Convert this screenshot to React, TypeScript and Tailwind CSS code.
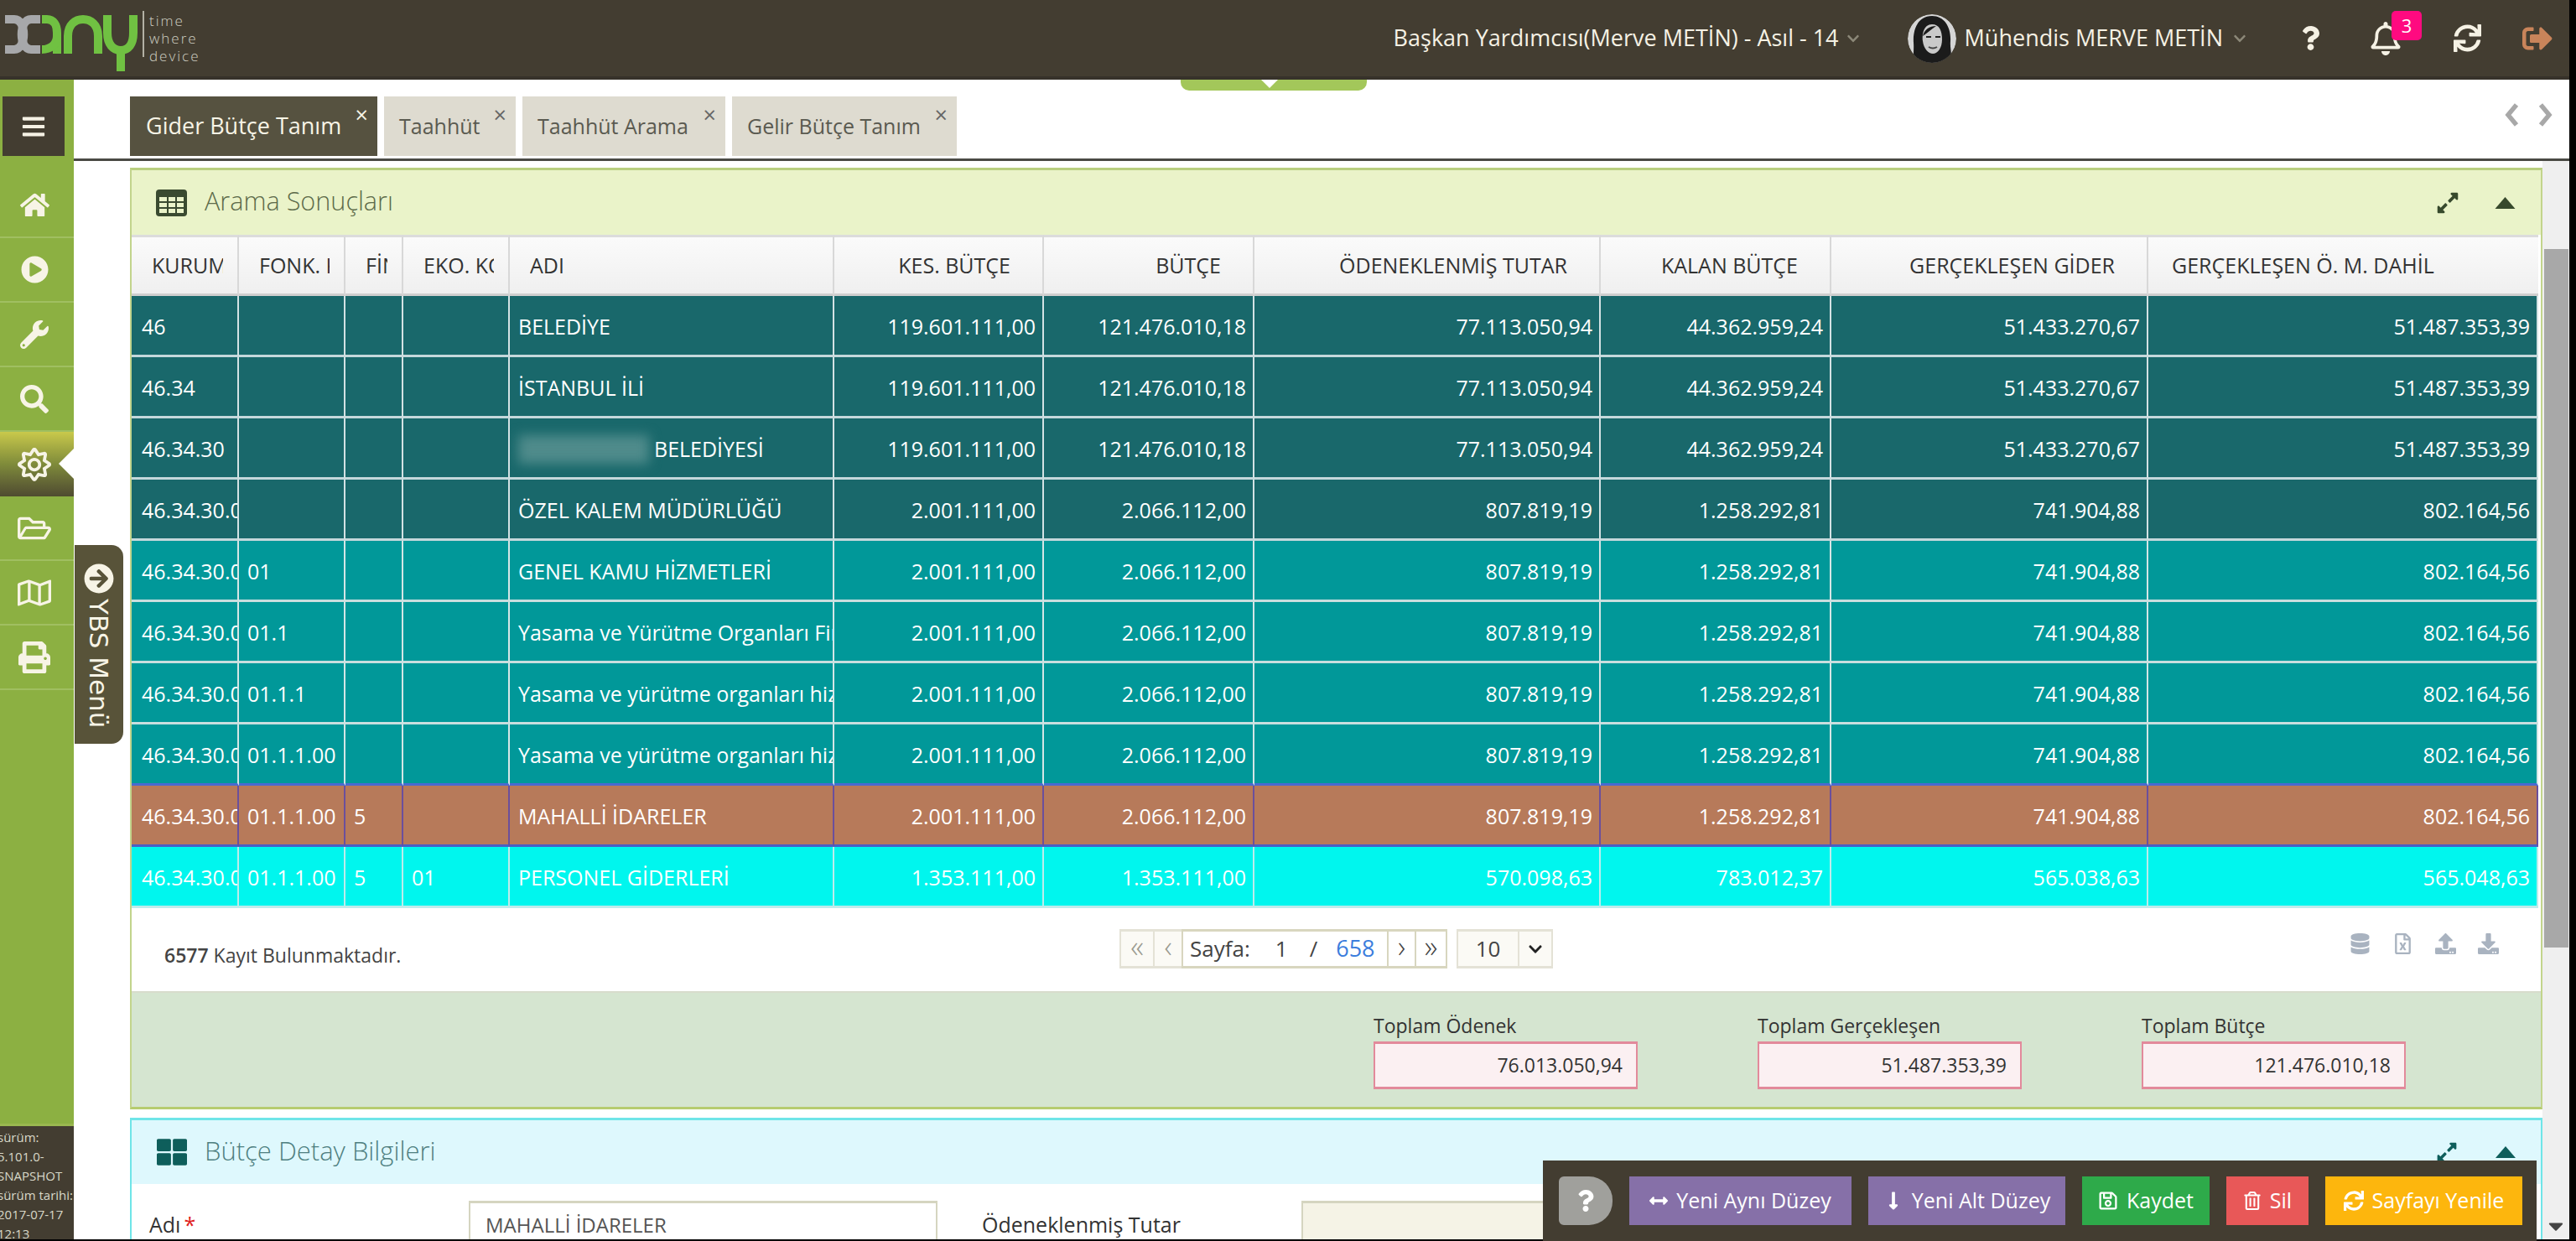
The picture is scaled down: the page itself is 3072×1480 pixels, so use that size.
import type { ReactNode } from "react";
import {
  FaHome,
  FaPlayCircle,
  FaWrench,
  FaSearch,
  FaRegSun,
  FaRegFolderOpen,
  FaRegMap,
  FaPrint,
  FaBars,
  FaChevronDown,
  FaQuestion,
  FaRegBell,
  FaSync,
  FaSignOutAlt,
  FaThLarge,
  FaExpandAlt,
  FaArrowCircleRight,
  FaDatabase,
  FaRegFileExcel,
  FaUpload,
  FaDownload,
  FaArrowsAltH,
  FaLongArrowAltDown,
  FaRegSave,
  FaRegTrashAlt,
  FaCaretDown,
} from "react-icons/fa";

type Row = {
  kurum: string;
  fonk: string;
  fin: string;
  eko: string;
  adi: ReactNode;
  nums: string[];
  kind: "dark" | "teal" | "tealLast" | "brown" | "cyan";
};

const big = ["119.601.111,00", "121.476.010,18", "77.113.050,94", "44.362.959,24", "51.433.270,67", "51.487.353,39"];
const mid = ["2.001.111,00", "2.066.112,00", "807.819,19", "1.258.292,81", "741.904,88", "802.164,56"];

const rows: Row[] = [
  { kurum: "46", fonk: "", fin: "", eko: "", adi: "BELEDİYE", nums: big, kind: "dark" },
  { kurum: "46.34", fonk: "", fin: "", eko: "", adi: "İSTANBUL İLİ", nums: big, kind: "dark" },
  {
    kurum: "46.34.30",
    fonk: "",
    fin: "",
    eko: "",
    adi: (
      <span className="flex items-center">
        <span className="mr-[6px] h-[34px] w-[156px] bg-[#4f8b8b] blur-[7px]" />
        BELEDİYESİ
      </span>
    ),
    nums: big,
    kind: "dark",
  },
  { kurum: "46.34.30.001", fonk: "", fin: "", eko: "", adi: "ÖZEL KALEM MÜDÜRLÜĞÜ", nums: mid, kind: "dark" },
  { kurum: "46.34.30.001", fonk: "01", fin: "", eko: "", adi: "GENEL KAMU HİZMETLERİ", nums: mid, kind: "teal" },
  { kurum: "46.34.30.001", fonk: "01.1", fin: "", eko: "", adi: "Yasama ve Yürütme Organları Finans ve Mali", nums: mid, kind: "teal" },
  { kurum: "46.34.30.001", fonk: "01.1.1", fin: "", eko: "", adi: "Yasama ve yürütme organları hizmetleri", nums: mid, kind: "teal" },
  { kurum: "46.34.30.001", fonk: "01.1.1.00", fin: "", eko: "", adi: "Yasama ve yürütme organları hizmetleri", nums: mid, kind: "tealLast" },
  { kurum: "46.34.30.001", fonk: "01.1.1.00", fin: "5", eko: "", adi: "MAHALLİ İDARELER", nums: mid, kind: "brown" },
  {
    kurum: "46.34.30.001",
    fonk: "01.1.1.00",
    fin: "5",
    eko: "01",
    adi: "PERSONEL GİDERLERİ",
    nums: ["1.353.111,00", "1.353.111,00", "570.098,63", "783.012,37", "565.038,63", "565.048,63"],
    kind: "cyan",
  },
];

const rowStyle = {
  dark: "bg-[#19686b] border-b-[#c4d8db] border-r-[#d3e2e4]",
  teal: "bg-[#019899] border-b-[#c9dede] border-r-[#d5e6e6]",
  tealLast: "bg-[#019899] border-b-[#4a6ad0] border-r-[#d5e6e6]",
  brown: "bg-[#b77a5a] border-b-[#4a5fc4] border-r-[#6b4f9c]",
  cyan: "bg-[#00f6ee] border-b-[#bdeceb] border-r-[#bdeceb]",
};

const sideItems = [
  { icon: <FaHome size={35} /> },
  { icon: <FaPlayCircle size={33} /> },
  { icon: <FaWrench size={34} /> },
  { icon: <FaSearch size={34} /> },
  { icon: <FaRegSun size={40} />, active: true },
  { icon: <FaRegFolderOpen size={40} /> },
  { icon: <FaRegMap size={40} /> },
  { icon: <FaPrint size={38} /> },
];

function Triangle({ className }: { className: string }) {
  return (
    <svg viewBox="0 0 24 14" className={className} fill="currentColor">
      <path d="M12 0 L24 14 H0 Z" />
    </svg>
  );
}

function GridIcon() {
  return (
    <svg viewBox="0 0 37 32" className="h-[32px] w-[37px]" fill="none">
      <rect width="37" height="32" rx="4" fill="#3a4a30" />
      <path d="M4 9 h9 v5 h-9 z M15 9 h8 v5 h-8 z M25 9 h8 v5 h-8 z M4 16 h9 v5 h-9 z M15 16 h8 v5 h-8 z M25 16 h8 v5 h-8 z M4 23 h9 v5 h-9 z M15 23 h8 v5 h-8 z M25 23 h8 v5 h-8 z" fill="#eaf3c9" />
    </svg>
  );
}

function Logo() {
  return (
    <svg viewBox="0 0 172 90" className="h-[90px] w-[172px]" fill="none" strokeWidth={10}>
      <g stroke="#a7a8aa">
        <path d="M6 22 H17 C32 22 32 58 17 58 H6" />
        <path d="M48 22 H37 C22 22 22 58 37 58 H48" />
      </g>
      <g stroke="#70c142">
        <path d="M50 22 H56 C64 22 68 29 68 38 V63" />
        <path d="M50 58 C60 58 68 52 68 42" />
        <path d="M81 63 V42 C81 28 90 22 99 22 C108 22 117 28 117 42 V63" />
        <path d="M128 17 V38 C128 52 135 59 144 59 C153 59 159 52 159 38 V17" />
        <path d="M144 59 V84" />
      </g>
      <path d="M171 12 V67" stroke="#d8d8cc" strokeWidth={1.5} />
    </svg>
  );
}

function Avatar() {
  return (
    <svg viewBox="0 0 58 58" className="h-[58px] w-[58px] shrink-0 rounded-full">
      <circle cx="29" cy="29" r="29" fill="#d5d5d5" />
      <path d="M29 2 C12 2 6 18 7 34 C8 46 4 54 14 58 H46 C56 52 50 44 51 32 C52 16 44 2 29 2 Z" fill="#1b1b1b" />
      <path d="M29 12 C19 12 17 24 18 32 C19 41 25 47 30 47 C36 47 41 40 41 30 C41 20 38 12 29 12 Z" fill="#c9c9c9" />
      <path d="M22 27 h6 M33 27 h6" stroke="#222" strokeWidth="2" />
      <path d="M25 39 q5 3 10 0" stroke="#444" strokeWidth="2" fill="none" />
      <path d="M18 26 C20 18 26 14 34 14 C28 18 24 22 18 26 Z" fill="#1b1b1b" />
    </svg>
  );
}

function Header() {
  return (
    <header className="flex h-[95px] shrink-0 items-center border-b-[4px] border-[#37322a] bg-[#433d31] pr-[20px]">
      <Logo />
      <div className="ml-[6px] flex flex-col text-[17px] leading-[21px] font-light tracking-[2px] text-[#cfcfc2]">
        <span>time</span>
        <span>where</span>
        <span>device</span>
      </div>
      <span className="ml-auto text-[27px] text-[#f5f1e4]">Başkan Yardımcısı(Merve METİN) - Asıl - 14</span>
      <FaChevronDown size={16} className="ml-[9px] text-[#8c8878]" />
      <div className="ml-[57px]">
        <Avatar />
      </div>
      <span className="ml-[10px] text-[27px] text-[#f5f1e4]">Mühendis MERVE METİN</span>
      <FaChevronDown size={16} className="ml-[12px] text-[#8c8878]" />
      <FaQuestion size={29} className="ml-[62px] text-[#f5f1e4]" />
      <div className="relative ml-[55px]">
        <FaRegBell size={40} className="text-[#f5f1e4]" />
        <span className="absolute -top-[13px] left-[27px] flex h-[35px] w-[36px] items-center justify-center rounded-[5px] bg-[#ff0a80] text-[22px] text-white">
          3
        </span>
      </div>
      <FaSync size={33} className="ml-[61px] text-[#f5f1e4]" />
      <FaSignOutAlt size={36} className="ml-[49px] text-[#c9845a]" />
    </header>
  );
}

function Sidebar() {
  return (
    <aside className="flex w-[88px] shrink-0 flex-col bg-[#8cb042]">
      <div className="ml-[3px] mt-[20px] flex h-[71px] w-[74px] items-center justify-center bg-[#433d31] text-[#f5f1e4]">
        <FaBars size={30} />
      </div>
      <div className="mt-[21px] flex flex-col">
        {sideItems.map((item, i) => (
          <div
            key={i}
            className={
              item.active
                ? "relative flex h-[77px] w-full items-center justify-center bg-gradient-to-b from-[#c9c94b] via-[#7f8b3a] to-[#4f4b30] pr-[6px] text-[#f7f4e6]"
                : "flex h-[77px] w-full items-center justify-center border-b-[2px] border-[#a0bf61] pr-[6px] text-[#f7f4e6]"
            }
          >
            {item.icon}
            {item.active && (
              <span className="absolute right-0 top-[20px] h-0 w-0 border-y-[18px] border-r-[18px] border-y-transparent border-r-white" />
            )}
          </div>
        ))}
      </div>
      <div className="mt-auto h-[138px] overflow-hidden border-t-[3px] border-[#9ab84f] bg-[#433d31] pt-[2px] text-[15px] leading-[23px] text-[#d8d8c8]">
        <div className="-ml-[3px] whitespace-nowrap">sürüm:</div>
        <div className="-ml-[3px] whitespace-nowrap">5.101.0-</div>
        <div className="-ml-[3px] whitespace-nowrap">SNAPSHOT</div>
        <div className="-ml-[3px] whitespace-nowrap">sürüm tarihi:</div>
        <div className="-ml-[3px] whitespace-nowrap">2017-07-17</div>
        <div className="-ml-[3px] whitespace-nowrap">12:13</div>
      </div>
    </aside>
  );
}

function Tab({ label, active, width }: { label: string; active?: boolean; width: string }) {
  return (
    <div
      className={`relative flex h-[71px] items-center ${width} ${
        active ? "bg-[#565240] pl-[19px] text-[27px] text-[#f7f4e6]" : "bg-[#dedbd0] pl-[18px] text-[25px] text-[#5a5a50]"
      }`}
    >
      {label}
      <span className={`absolute right-[11px] top-[2px] text-[27px] ${active ? "text-[#f7f4e6]" : "text-[#666]"}`}>×</span>
    </div>
  );
}

function TabStrip() {
  return (
    <div className="relative flex h-[97px] shrink-0 items-start justify-between border-b-[3px] border-[#4a4a44] bg-white pl-[67px] pr-[20px] pt-[20px]">
      <div className="flex gap-[8px]">
        <Tab label="Gider Bütçe Tanım" active width="w-[295px]" />
        <Tab label="Taahhüt" width="w-[157px]" />
        <Tab label="Taahhüt Arama" width="w-[242px]" />
        <Tab label="Gelir Bütçe Tanım" width="w-[268px]" />
      </div>
      <div className="mt-[8px] flex gap-[23px]">
        <svg viewBox="0 0 17 28" className="h-[28px] w-[17px]" fill="none" stroke="#a8a8a8" strokeWidth={5.5}>
          <path d="M14 2 L4 14 L14 26" />
        </svg>
        <svg viewBox="0 0 17 28" className="h-[28px] w-[17px]" fill="none" stroke="#a8a8a8" strokeWidth={5.5}>
          <path d="M3 2 L13 14 L3 26" />
        </svg>
      </div>
      <div className="absolute left-[1320px] top-0 flex h-[13px] w-[222px] justify-center rounded-b-[10px] bg-[#a3c75a] pr-[10px]">
        <svg viewBox="0 0 20 10" className="h-[10px] w-[20px]" fill="#fff">
          <path d="M0 0 H20 L10 10 Z" />
        </svg>
      </div>
    </div>
  );
}

function GridTable() {
  const cols = ["w-[128px]", "w-[127px]", "w-[69px]", "w-[127px]", "w-[387px]", "w-[250px]", "w-[251px]", "w-[413px]", "w-[275px]", "w-[378px]", "w-[465px]"];
  const heads = ["KURUM KODU", "FONK. KODU", "FİN. KODU", "EKO. KODU", "ADI"];
  const numHeads = ["KES. BÜTÇE", "BÜTÇE", "ÖDENEKLENMİŞ TUTAR", "KALAN BÜTÇE", "GERÇEKLEŞEN GİDER"];
  return (
    <table className="w-[2870px] table-fixed border-separate border-spacing-0 text-[25px]">
      <colgroup>
        {cols.map((c, i) => (
          <col key={i} className={c} />
        ))}
      </colgroup>
      <thead>
        <tr className="h-[73px] bg-gradient-to-b from-[#fbfbfb] to-[#efefef] text-[#333]">
          {heads.map((h) => (
            <th key={h} className="border-b-[3px] border-r-[2px] border-t-[3px] border-b-[#cfcfcf] border-r-[#d8d8d8] border-t-[#dcdcdc] pl-[24px] pr-[17px] text-left font-medium">
              <div className="overflow-hidden whitespace-nowrap">{h}</div>
            </th>
          ))}
          {numHeads.map((h) => (
            <th key={h} className="border-b-[3px] border-r-[2px] border-t-[3px] border-b-[#cfcfcf] border-r-[#d8d8d8] border-t-[#dcdcdc] pr-[38px] text-right font-medium whitespace-nowrap">
              {h}
            </th>
          ))}
          <th className="border-b-[3px] border-t-[3px] border-b-[#cfcfcf] border-t-[#dcdcdc] pl-[28px] text-left font-medium whitespace-nowrap">GERÇEKLEŞEN Ö. M. DAHİL</th>
        </tr>
      </thead>
      <tbody>
        {rows.map((r, i) => {
          const cell = `h-[73px] overflow-hidden whitespace-nowrap border-b-[3px] border-r-[2px] pt-[3px] text-white ${rowStyle[r.kind]}`;
          return (
            <tr key={i}>
              <td className={`${cell} pl-[12px]`}>{r.kurum}</td>
              <td className={`${cell} pl-[10px]`}>{r.fonk}</td>
              <td className={`${cell} pl-[10px]`}>{r.fin}</td>
              <td className={`${cell} pl-[10px]`}>{r.eko}</td>
              <td className={`${cell} pl-[10px]`}>{r.adi}</td>
              {r.nums.map((n, j) => (
                <td key={j} className={`${cell} pr-[8px] text-right`}>
                  {n}
                </td>
              ))}
            </tr>
          );
        })}
      </tbody>
    </table>
  );
}

function Pager() {
  const btn = "flex h-[47px] items-center justify-center border-y-[3px] border-l-[2px] border-[#e4e2d6] bg-[#fbfaf5] pb-[6px] text-[36px] font-light text-[#9a9a90]";
  const dark = "flex h-[47px] items-center justify-center border-y-[3px] border-l-[2px] border-[#d8d6bf] bg-white pb-[6px] text-[36px] font-light";
  return (
    <div className="flex text-[26px] text-[#444]">
      <div className={`${btn} w-[40px]`}>«</div>
      <div className={`${btn} w-[34px]`}>‹</div>
      <div className="flex h-[47px] w-[245px] items-center border-y-[3px] border-l-[2px] border-[#d8d6bf] bg-white pl-[8px]">
        <span>Sayfa:</span>
        <span className="ml-[30px]">1</span>
        <span className="ml-[26px]">/</span>
        <span className="ml-[22px] text-[27px] text-[#3b7ddd]">658</span>
      </div>
      <div className={`${dark} w-[33px]`}>›</div>
      <div className={`${dark} w-[39px] border-r-[2px]`}>»</div>
      <div className="ml-[11px] flex h-[47px] w-[115px] border-y-[3px] border-x-[2px] border-[#e4e2d6] bg-[#fbfaf5]">
        <span className="flex w-[73px] items-center justify-center border-r-[2px] border-[#e4e2d6]">10</span>
        <span className="flex flex-1 items-center justify-center text-[#222]">
          <FaChevronDown size={18} />
        </span>
      </div>
    </div>
  );
}

function Total({ label, value }: { label: string; value: string }) {
  return (
    <div className="flex w-[315px] flex-col">
      <span className="text-[23px] leading-[30px] text-[#333]">{label}</span>
      <div className="mt-[4px] flex h-[57px] items-center justify-end border-x-[2px] border-y-[3px] border-[#e28a9b] bg-[#fbf0f2] pr-[16px] text-[23px] text-[#333]">
        {value}
      </div>
    </div>
  );
}

function ResultsPanel() {
  return (
    <section className="w-[2877px] shrink-0 border-x-[2px] border-b-[3px] border-t-[3px] border-x-[#c2d48c] border-b-[#b6cc70] border-t-[#b9cf7f]">
      <div className="flex h-[77px] items-center bg-[#eaf3c9] pl-[29px] pr-[30px]">
        <GridIcon />
        <span className="mb-[3px] ml-[21px] text-[30.6px] font-light text-[#5d6b4a]">Arama Sonuçları</span>
        <FaExpandAlt size={28} className="ml-auto text-[#37492c]" />
        <Triangle className="ml-[42px] h-[14px] w-[25px] text-[#37492c]" />
      </div>
      <GridTable />
      <div className="flex h-[99px] bg-white">
        <div className="w-[1178px] pl-[39px] pt-[40px] text-[23px] leading-[32px] text-[#444]">
          <b className="font-semibold">6577</b> Kayıt Bulunmaktadır.
        </div>
        <div className="pt-[25px]">
          <Pager />
        </div>
        <div className="ml-auto flex gap-[26px] pr-[50px] pt-[30px] text-[#a9b3c0]">
          <FaDatabase size={25} />
          <FaRegFileExcel size={25} />
          <FaUpload size={25} />
          <FaDownload size={25} />
        </div>
      </div>
      <div className="flex h-[138px] gap-[143px] border-t-[2px] border-[#d8dccc] bg-[#d5e5d0] pl-[1481px] pt-[24px]">
        <Total label="Toplam Ödenek" value="76.013.050,94" />
        <Total label="Toplam Gerçekleşen" value="51.487.353,39" />
        <Total label="Toplam Bütçe" value="121.476.010,18" />
      </div>
    </section>
  );
}

function DetailPanel() {
  return (
    <section className="mt-[10px] w-[2877px] flex-1 overflow-hidden border-x-[2px] border-t-[3px] border-[#6fe5e8]">
      <div className="flex h-[76px] items-center bg-[#def8fd] pl-[30px] pr-[30px]">
        <FaThLarge size={36} className="text-[#0e5e5b]" />
        <span className="mb-[3px] ml-[21px] text-[31px] font-light text-[#4e7f80]">Bütçe Detay Bilgileri</span>
        <FaExpandAlt size={26} className="ml-auto text-[#0e5e5b]" />
        <Triangle className="ml-[45px] h-[14px] w-[24px] text-[#0e5e5b]" />
      </div>
      <div className="flex bg-white pt-[20px] text-[25px] text-[#333]">
        <div className="w-[402px] pl-[21px] pt-[10px]">
          Adı<span className="ml-[4px] text-[#e02020]">*</span>
        </div>
        <div className="h-[60px] w-[559px] border-x-[2px] border-t-[3px] border-[#d5d5c0] pl-[18px] pt-[8px] text-[24px] text-[#555]">MAHALLİ İDARELER</div>
        <div className="ml-[53px] w-[381px] pt-[10px]">Ödeneklenmiş Tutar</div>
        <div className="h-[60px] w-[600px] border-x-[2px] border-t-[3px] border-[#d5d5c0] bg-[#f5f3e6]" />
      </div>
    </section>
  );
}

function ActionBar() {
  const btn = "flex h-[58px] items-center justify-center gap-[10px] text-[25px] text-white";
  return (
    <div className="absolute left-[1840px] top-[1384px] flex h-[96px] w-[1185px] items-start gap-[20px] bg-[#433d31] pl-[19px] pt-[19px]">
      <div className="flex h-[58px] w-[64px] items-center justify-center rounded-l-[6px] rounded-r-[28px] bg-[#a0a09c] text-white">
        <FaQuestion size={26} />
      </div>
      <button className={`${btn} w-[265px] bg-[#8670a8]`}>
        <FaArrowsAltH size={22} />
        Yeni Aynı Düzey
      </button>
      <button className={`${btn} w-[235px] bg-[#8670a8]`}>
        <FaLongArrowAltDown size={24} />
        Yeni Alt Düzey
      </button>
      <button className={`${btn} w-[152px] bg-[#2eaa4a]`}>
        <FaRegSave size={24} />
        Kaydet
      </button>
      <button className={`${btn} w-[98px] bg-[#e85858]`}>
        <FaRegTrashAlt size={22} />
        Sil
      </button>
      <button className={`${btn} w-[235px] bg-[#fdb60d]`}>
        <FaSync size={24} />
        Sayfayı Yenile
      </button>
    </div>
  );
}

export default function App() {
  return (
    <div className="relative h-[1480px] w-[3072px] overflow-hidden bg-black pb-[2px] pr-[8px] font-['Open_Sans','Noto_Sans',sans-serif]">
      <div className="flex h-full flex-col bg-white">
        <Header />
        <div className="flex min-h-0 flex-1">
          <Sidebar />
          <main className="flex min-w-0 flex-1 flex-col">
            <TabStrip />
            <div className="flex min-h-0 flex-1">
              <div className="flex min-w-0 flex-1 flex-col pl-[67px] pt-[8px]">
                <ResultsPanel />
                <DetailPanel />
              </div>
              <div className="flex w-[32px] shrink-0 flex-col items-center bg-[#efefef] pt-[105px]">
                <div className="h-[833px] w-[29px] bg-[#a8a8a8]" />
                <FaCaretDown size={28} className="mt-auto mb-[2px] text-[#444]" />
              </div>
            </div>
          </main>
        </div>
      </div>

      <div className="absolute left-[89px] top-[650px] flex h-[237px] w-[58px] flex-col items-center rounded-r-[14px] bg-[#585339] pt-[22px] text-[#f7f4e6]">
        <FaArrowCircleRight size={36} />
        <span className="mt-[6px] font-['DejaVu_Sans',sans-serif] text-[31px] leading-[36px] [writing-mode:vertical-rl]">YBS Menü</span>
      </div>

      <ActionBar />
    </div>
  );
}
